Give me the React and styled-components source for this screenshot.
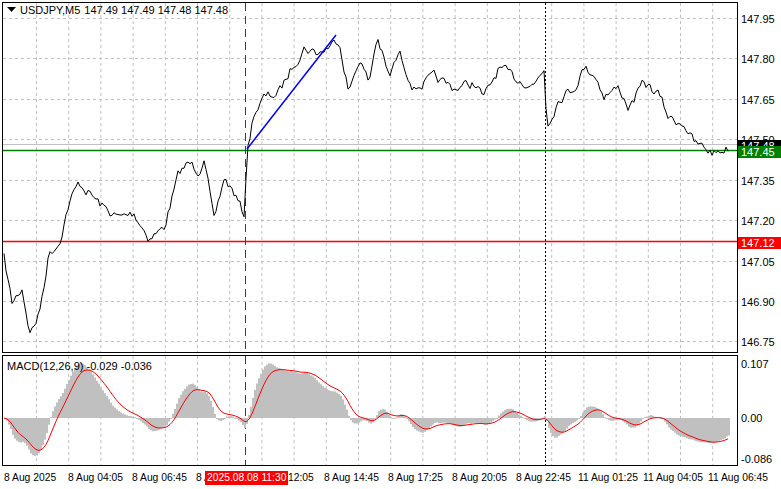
import React from "react";
import styled, { createGlobalStyle } from "styled-components";

const Global = createGlobalStyle`
  html,body{margin:0;padding:0;background:#fff;}
  body{font-family:"Liberation Sans",Arial,sans-serif;font-size:11px;}
`;

const W = 736;

const anchors = [[0,255],[8,300],[18,285],[26,330],[35,312],[45,250],[55,240],[65,200],[75,180],[85,190],[100,205],[115,215],[130,210],[145,235],[160,225],[175,170],[185,160],[195,168],[200,152],[210,220],[220,175],[230,190],[240,212],[243,150],[250,110],[260,95],[275,90],[290,60],[300,45],[315,50],[330,40],[335,35],[345,90],[355,55],[365,80],[373,33],[385,75],[395,50],[410,85],[430,75],[450,85],[470,80],[480,95],[495,65],[510,75],[530,82],[540,65],[543,122],[555,95],[570,85],[580,65],[590,70],[600,92],[615,85],[625,105],[640,80],[655,92],[665,115],[680,120],[690,140],[700,145],[710,150],[720,146],[725,145]];

let seed = 7;
const rnd = () => { seed = (seed * 16807) % 2147483647; return seed / 2147483647; };

const pts = [];
{
  let n = 0;
  for (let x = 0; x <= 725; x += 2) {
    let i = 0;
    while (i < anchors.length - 2 && anchors[i + 1][0] < x) i++;
    const [x0, y0] = anchors[i], [x1, y1] = anchors[i + 1];
    const t = x1 === x0 ? 0 : Math.min(1, Math.max(0, (x - x0) / (x1 - x0)));
    n = n * 0.5 + (rnd() - 0.5) * 9;
    pts.push([x, y0 + (y1 - y0) * t + n]);
  }
}
const priceOf = (y) => 147.95 - ((y - 15) / 40.4) * 0.15;

const ema = (arr, n) => { const k = 2 / (n + 1); let e = arr[0]; return arr.map(v => (e = v * k + e * (1 - k))); };
const pr = pts.map(p => priceOf(p[1]));
const e12 = ema(pr, 12), e26 = ema(pr, 26);
const macd = e12.map((v, i) => v - e26[i]);
const sig = ema(macd, 9);
const mx = Math.max(...macd.map(Math.abs));
const ZERO = 62;
const sc = 55 / mx;

const Root = styled.div`
  width:781px;height:489px;display:flex;flex-direction:column;background:#fff;overflow:hidden;
`;
const Row = styled.div`display:flex;height:${p => p.h}px;margin-top:${p => p.mt || 0}px;`;
const Panel = styled.div`
  position:relative;margin-left:2px;width:${W}px;height:${p => p.h}px;
  border:1px solid #000;box-sizing:border-box;
`;
const Axis = styled.div`position:relative;flex:1;`;
const Lbl = styled.span`
  position:absolute;left:3px;font-size:11px;line-height:12px;color:#000;
  top:${p => p.y - 6}px;
`;
const Tag = styled.span`
  position:absolute;left:0;width:43px;padding-left:3px;box-sizing:border-box;font-size:11px;line-height:12px;
  color:#fff;background:${p => p.bg};top:${p => p.y - 6}px;
`;
const Title = styled.div`
  position:absolute;left:4px;top:${p => p.t}px;display:flex;align-items:center;gap:4px;
  font-size:11px;color:#000;white-space:nowrap;
`;
const Plot = styled.svg`display:block;position:absolute;left:0;top:0;`;
const TimeAxis = styled.div`position:relative;height:23px;margin-left:2px;`;
const TLbl = styled.span`position:absolute;top:6px;left:${p => p.x}px;font-size:10.3px;white-space:nowrap;`;
const TRed = styled(TLbl)`background:#f00;color:#fff;padding:0 2px;top:5px;line-height:14px;`;

const Grid = ({ h, rows }) => (
  <g stroke="#c0c0c0" strokeDasharray="3,3" strokeWidth="1">
    {Array.from({ length: 22 }, (_, i) => 33 + i * 32.2).map(x => <line key={x} x1={x + .5} x2={x + .5} y1={0} y2={h} />)}
    {rows.map(y => <line key={y} x1={0} x2={W} y1={y + .5} y2={y + .5} />)}
  </g>
);

const mainRows = [15, 55, 96, 136, 177, 217, 258, 298, 338];
const prices = ["147.95","147.80","147.65","147.50","147.35","147.20","147.05","146.90","146.75"];

export default function App() {
  const line = pts.map(p => `${p[0] + 1},${p[1].toFixed(1)}`).join(" ");
  const sline = sig.map((v, i) => `${pts[i][0] + 1},${(ZERO - v * sc).toFixed(1)}`).join(" ");
  const times = [[2,"8 Aug 2025"],[66,"8 Aug 04:05"],[130,"8 Aug 06:45"],[194,"8 A"],[286,"12:05"],[322,"8 Aug 14:45"],[386,"8 Aug 17:25"],[450,"8 Aug 20:05"],[514,"8 Aug 22:45"],[576,"11 Aug 01:25"],[641,"11 Aug 04:05"],[706,"11 Aug 06:45"]];
  return (
    <Root>
      <Global />
      <Row h={351} mt={2}>
        <Panel h={351}>
          <Plot width={W - 2} height={349}>
            <Grid h={349} rows={mainRows} />
            <line x1={0} x2={W} y1={141.5} y2={141.5} stroke="#c0c0c0" />
            <line x1={0} x2={W} y1={147.5} y2={147.5} stroke="#008000" strokeWidth="1.5" />
            <line x1={0} x2={W} y1={238.5} y2={238.5} stroke="#f00" strokeWidth="1.5" />
            <line x1={242.5} x2={242.5} y1={0} y2={349} stroke="#c00" strokeDasharray="8,5" />
            <line x1={542.5} x2={542.5} y1={0} y2={349} stroke="#000" strokeDasharray="2,2" />
            <polyline points={line} fill="none" stroke="#000" strokeWidth="1" />
            <line x1={244} y1={146} x2={333} y2={32} stroke="#0000ff" strokeWidth="1.5" />
          </Plot>
          <Title t={1}>
            <svg width="9" height="6"><polygon points="0,0 9,0 4.5,5" fill="#000" /></svg>
            <span>USDJPY,M5</span><span>147.49 147.49 147.48 147.48</span>
          </Title>
        </Panel>
        <Axis>
          {prices.map((p, i) => <Lbl key={p} y={mainRows[i] + 2}>{p}</Lbl>)}
          <Tag bg="#000" y={144}>147.48</Tag>
          <Tag bg="#008000" y={150}>147.45</Tag>
          <Tag bg="#f00" y={241}>147.12</Tag>
        </Axis>
      </Row>
      <Row h={111} mt={2}>
        <Panel h={111}>
          <Plot width={W - 2} height={109}>
            <Grid h={109} rows={[]} />
            <line x1={242.5} x2={242.5} y1={0} y2={109} stroke="#c00" strokeDasharray="8,5" />
            <line x1={542.5} x2={542.5} y1={0} y2={109} stroke="#000" strokeDasharray="2,2" />
            {macd.map((v, i) => {
              const h = v * sc;
              return <rect key={i} x={pts[i][0] + 1} width={2} y={h > 0 ? ZERO - h : ZERO} height={Math.max(1, Math.abs(h))} fill="#c0c0c0" />;
            })}
            <polyline points={sline} fill="none" stroke="#f00" strokeWidth="1" />
          </Plot>
          <Title t={4}><span>MACD(12,26,9) -0.029 -0.036</span></Title>
        </Panel>
        <Axis>
          <Lbl y={9}>0.107</Lbl>
          <Lbl y={63}>0.00</Lbl>
          <Lbl y={104}>-0.086</Lbl>
        </Axis>
      </Row>
      <TimeAxis>
        {times.map(([x, t]) => <TLbl key={t} x={x}>{t}</TLbl>)}
        <TRed x={203}>2025.08.08 11:30</TRed>
      </TimeAxis>
    </Root>
  );
}
